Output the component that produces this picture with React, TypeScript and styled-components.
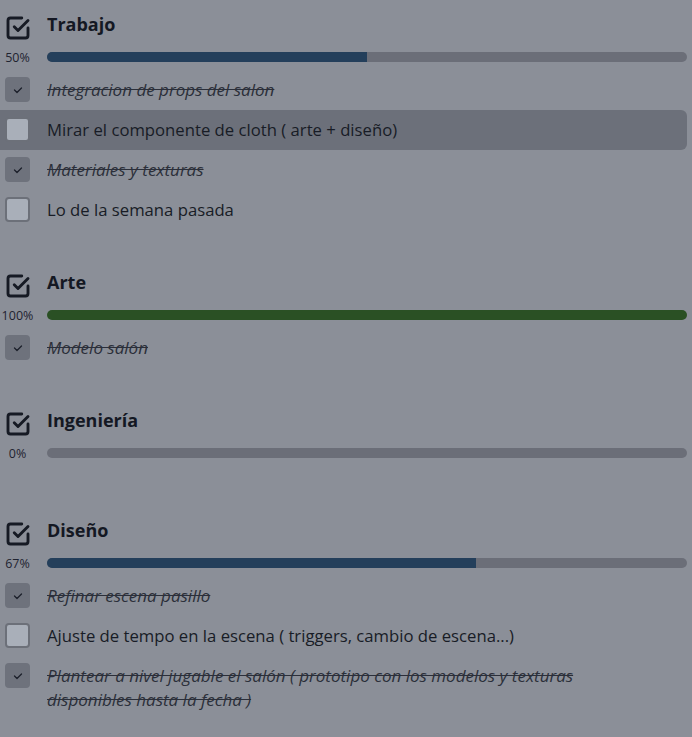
import styled, { createGlobalStyle } from "styled-components";

const GlobalStyle = createGlobalStyle`
  html, body {
    margin: 0;
    padding: 0;
    background: #8b8f98;
  }
  body {
    font-family: "Open Sans", "Noto Sans", sans-serif;
    color: #161a24;
  }
`;

interface ITask {
    title: string,
    done: boolean,
    highlighted?: boolean
}

interface IGroup {
    name: string,
    color: string,
    tasks: ITask[]
}

const groups: IGroup[] = [
    {
        name: "Trabajo",
        color: "#243f5b",
        tasks: [
            {title: "Integracion de props del salon", done: true},
            {title: "Mirar el componente de cloth ( arte + diseño)", done: false, highlighted: true},
            {title: "Materiales y texturas", done: true},
            {title: "Lo de la semana pasada", done: false},
        ]
    },
    {
        name: "Arte",
        color: "#2a5024",
        tasks: [
            {title: "Modelo salón", done: true},
        ]
    },
    {
        name: "Ingeniería",
        color: "#243f5b",
        tasks: []
    },
    {
        name: "Diseño",
        color: "#243f5b",
        tasks: [
            {title: "Refinar escena pasillo", done: true},
            {title: "Ajuste de tempo en la escena ( triggers, cambio de escena...)", done: false},
            {title: "Plantear a nivel jugable el salón ( prototipo con los modelos y texturas disponibles hasta la fecha )", done: true},
        ]
    },
];

const Page = styled.main`
  display: flex;
  flex-direction: column;
  gap: 40px;
  padding: 12px 5px 20px 0;
`;

const Group = styled.section`
  display: flex;
  flex-direction: column;
`;

const Header = styled.header`
  display: grid;
  grid-template-columns: 35px 1fr;
  column-gap: 12px;
  align-items: start;
  height: 31px;
`;

const HeaderIcon = styled.svg`
  width: 30px;
  height: 30px;
  margin: 1px 0 0 3px;
  color: #161a24;
`;

const Title = styled.h2`
  margin: 0;
  font-family: "Open Sans", sans-serif;
  font-size: 18px;
  line-height: 24px;
  font-weight: 700;
  color: #141823;
`;

const ProgressRow = styled.div`
  display: grid;
  grid-template-columns: 35px 1fr;
  column-gap: 12px;
  align-items: center;
  height: 16px;
  margin-top: 5px;
`;

const Percent = styled.span`
  font-size: 12.5px;
  line-height: 16px;
  padding-top: 2px;
  text-align: center;
  color: #1f2330;
`;

const Track = styled.div`
  height: 10px;
  border-radius: 5px;
  background: #6b6e78;
  overflow: hidden;
`;

const Fill = styled.div<{ $color: string }>`
  height: 100%;
  background: ${p => p.$color};
`;

const TaskList = styled.ul`
  list-style: none;
  margin: 6px 0 0;
  padding: 0;
  min-height: 12px;
`;

const TaskRow = styled.li<{ $highlighted?: boolean }>`
  display: grid;
  grid-template-columns: 35px 1fr;
  column-gap: 12px;
  align-items: start;
  padding: 8px 0;
  border-radius: 0 6px 6px 0;
  background: ${p => p.$highlighted ? "#6c707a" : "transparent"};
`;

const Box = styled.span<{ $done: boolean }>`
  box-sizing: border-box;
  width: 25px;
  height: 25px;
  margin: -1px 0 0 5px;
  border-radius: 4px;
  display: flex;
  align-items: center;
  justify-content: center;
  background: ${p => p.$done ? "#6e727c" : "#a9afb9"};
  border: ${p => p.$done ? "none" : "2px solid #6c7079"};
  color: #1c202b;
`;

const TaskText = styled.span<{ $done: boolean }>`
  font-size: ${p => p.$done ? "17px" : "16.7px"};
  line-height: 24px;
  font-style: ${p => p.$done ? "italic" : "normal"};
  text-decoration: ${p => p.$done ? "line-through" : "none"};
  color: ${p => p.$done ? "#2b2f3a" : "#181c26"};
  padding-right: 100px;
`;

const CheckIcon = () => (
    <HeaderIcon viewBox="0 0 24 24" fill="none" stroke="currentColor" strokeWidth={2.3}
                strokeLinecap="round" strokeLinejoin="round">
        <path d="M9 11l3 3l8 -8"/>
        <path d="M20 12v6a2 2 0 0 1 -2 2h-12a2 2 0 0 1 -2 -2v-12a2 2 0 0 1 2 -2h9"/>
    </HeaderIcon>
);

const SmallCheck = () => (
    <svg width="12" height="12" viewBox="0 0 24 24" fill="none" stroke="currentColor"
         strokeWidth={2.6} strokeLinecap="round" strokeLinejoin="round">
        <path d="M5 12l5 5l9 -9"/>
    </svg>
);

export default function App() {
    return <>
        <GlobalStyle/>
        <Page>
            {groups.map((group) => {
                const done = group.tasks.filter(t => t.done).length;
                const pct = group.tasks.length ? Math.round(done / group.tasks.length * 100) : 0;
                return (
                    <Group key={group.name}>
                        <Header>
                            <CheckIcon/>
                            <Title>{group.name}</Title>
                        </Header>
                        <ProgressRow>
                            <Percent>{pct}%</Percent>
                            <Track>
                                <Fill $color={group.color} style={{width: `${pct}%`}}/>
                            </Track>
                        </ProgressRow>
                        <TaskList>
                            {group.tasks.map((task) => (
                                <TaskRow key={task.title} $highlighted={task.highlighted}>
                                    <Box $done={task.done}>{task.done && <SmallCheck/>}</Box>
                                    <TaskText $done={task.done}>{task.title}</TaskText>
                                </TaskRow>
                            ))}
                        </TaskList>
                    </Group>
                );
            })}
        </Page>
    </>
}
